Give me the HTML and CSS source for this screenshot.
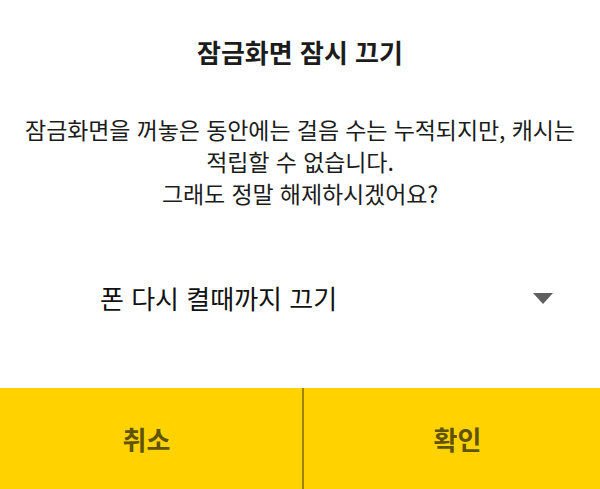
FILE: index.html
```html
<!DOCTYPE html>
<html lang="ko">
<head>
<meta charset="utf-8">
<link rel="stylesheet" href="styles.css">
</head>
<body>
<div class="dialog">
  <h1 class="title">잠금화면 잠시 끄기</h1>
  <p class="message">잠금화면을 꺼놓은 동안에는 걸음 수는 누적되지만, 캐시는<br>적립할 수 없습니다.<br>그래도 정말 해제하시겠어요?</p>
  <div class="select">
    <span class="select-label">폰 다시 켤때까지 끄기</span>
    <svg class="caret" width="20" height="11" viewBox="0 0 20 11"><polygon points="0,0 20,0 10,11" fill="#5f5f5f"/></svg>
  </div>
  <div class="actions">
    <button class="btn btn-cancel">취소</button>
    <button class="btn btn-ok">확인</button>
  </div>
</div>
</body>
</html>
```
FILE: styles.css
```css
html, body {
  margin: 0;
  padding: 0;
  background: #ffffff;
}
body {
  font-family: "Noto Sans CJK KR", "Noto Sans", sans-serif;
  color: #1a1a1a;
}
.dialog {
  width: 600px;
  height: 489px;
  display: flex;
  flex-direction: column;
}
.title {
  margin: 36px 0 0;
  font-size: 26px;
  font-weight: 700;
  line-height: 32px;
  text-align: center;
  color: #1c1c1c;
}
.message {
  margin: 45px 0 0;
  font-size: 23px;
  letter-spacing: -0.1px;
  line-height: 32px;
  text-align: center;
  color: #1c1c1c;
}
.select {
  margin: 73px 0 0;
  padding: 0 47px 0 100px;
  display: flex;
  align-items: center;
  justify-content: space-between;
  height: 32px;
}
.select-label {
  font-size: 26px;
  line-height: 32px;
  color: #111111;
}
.caret {
  display: block;
}
.actions {
  margin-top: auto;
  height: 101px;
  display: flex;
  background: #ffd200;
}
.btn {
  border: 0;
  background: transparent;
  font-family: inherit;
  font-size: 26px;
  font-weight: 700;
  color: #605300;
  padding: 0;
}
.btn-cancel {
  width: 302px;
  padding-right: 9px;
}
.btn-ok {
  flex: 1;
  border-left: 2px solid #9c8500;
  padding-left: 11px;
}
```
